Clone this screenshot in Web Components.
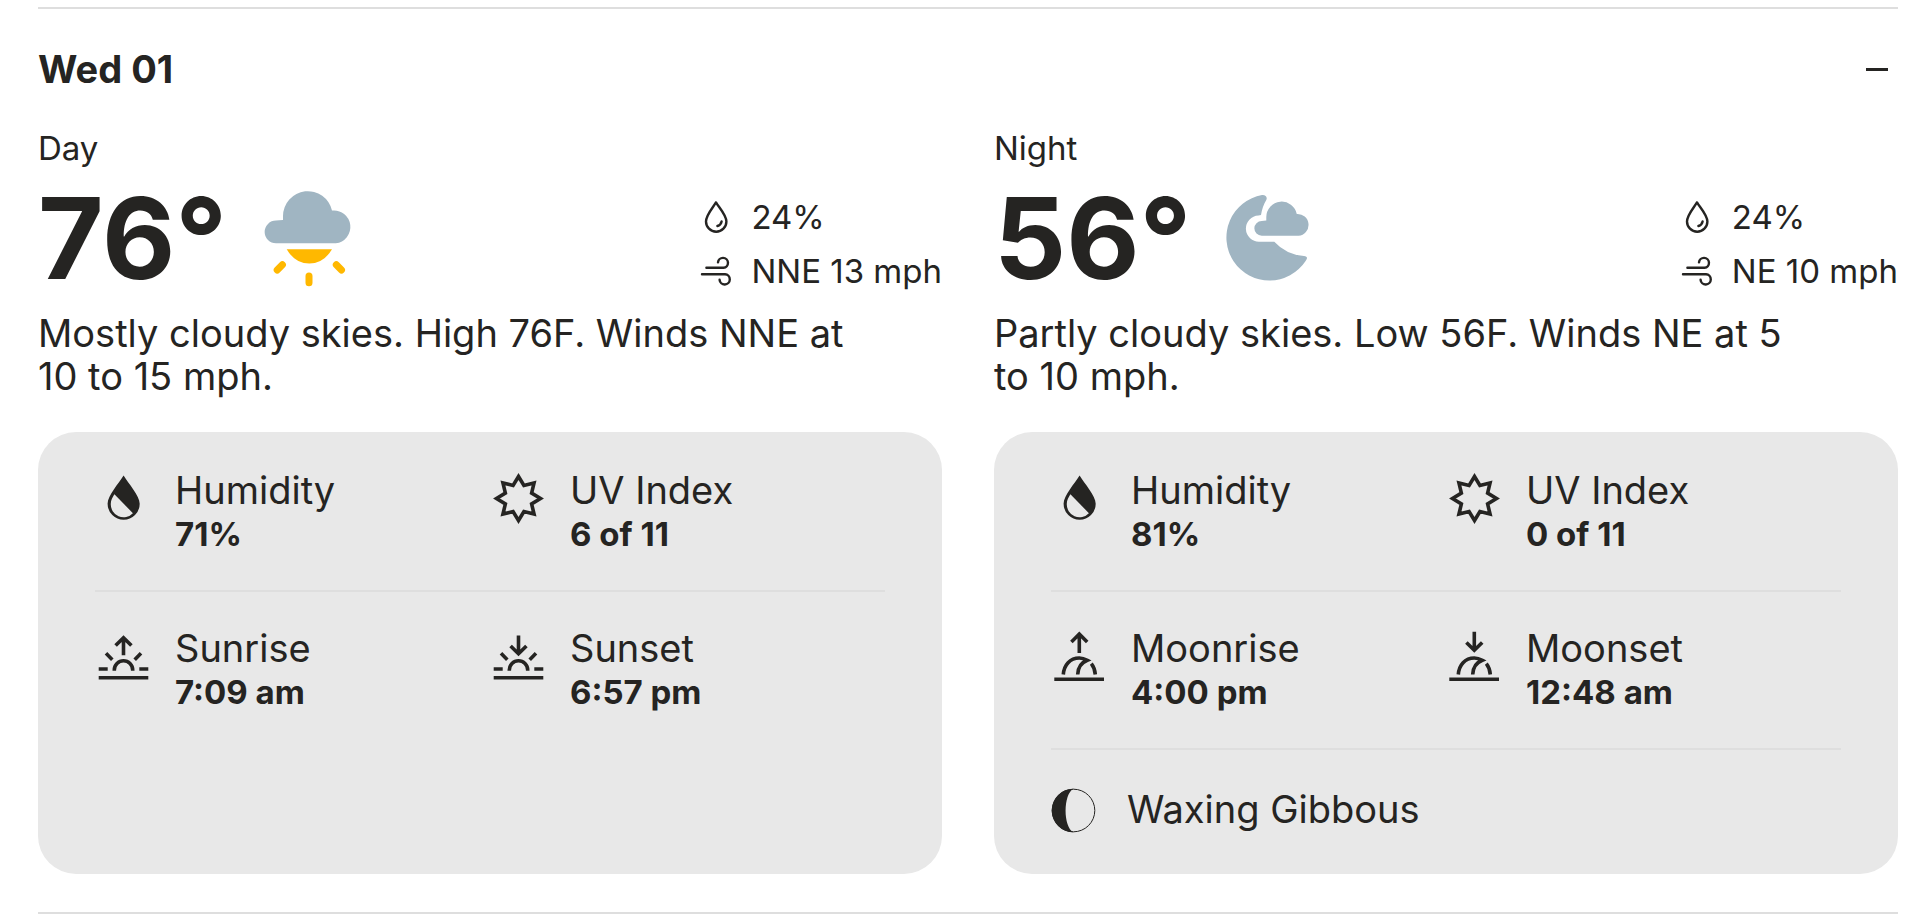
<!DOCTYPE html>
<html lang="en">
<head>
<meta charset="utf-8">
<title>Daily forecast</title>
<meta name="viewport" content="width=device-width, initial-scale=1">
<style>
  body {
    margin: 0;
    background: #fff;
    color: #252422;
    font-family: Inter, "Liberation Sans", sans-serif;
  }
</style>
</head>
<body>
<forecast-day label="Wed 01">
  <day-part name="Day" temp="76°" sky="cloud-sun" rain="24%" wind="NNE 13 mph">
    <span slot="summary">Mostly cloudy skies. High 76F. Winds NNE at 10 to 15 mph.</span>
    <detail-row>
      <detail-item icon="humidity" label="Humidity" value="71%"></detail-item>
      <detail-item icon="uv" label="UV Index" value="6 of 11"></detail-item>
    </detail-row>
    <detail-row last>
      <detail-item icon="sunrise" label="Sunrise" value="7:09 am"></detail-item>
      <detail-item icon="sunset" label="Sunset" value="6:57 pm"></detail-item>
    </detail-row>
  </day-part>
  <day-part name="Night" temp="56°" sky="cloud-moon" rain="24%" wind="NE 10 mph">
    <span slot="summary">Partly cloudy skies. Low 56F. Winds NE at 5 to 10 mph.</span>
    <detail-row>
      <detail-item icon="humidity" label="Humidity" value="81%"></detail-item>
      <detail-item icon="uv" label="UV Index" value="0 of 11"></detail-item>
    </detail-row>
    <detail-row>
      <detail-item icon="moonrise" label="Moonrise" value="4:00 pm"></detail-item>
      <detail-item icon="moonset" label="Moonset" value="12:48 am"></detail-item>
    </detail-row>
    <moon-phase>Waxing Gibbous</moon-phase>
  </day-part>
</forecast-day>

<script>
const moonBody = `<path d="M12.3 46.5C13 37 19 30 28.3 30C31.5 30 34 31 36.3 32.3C30.5 34.5 27 40 26.7 46.5M40.3 35.7Q43.8 40 44.3 46.5M3.3 51.3H53"/>`;
const sunBody = `<path d="M19.3 42.8V42a9.2 9.2 0 0 1 18.4 0v.8M3.7 41H12.7M44.3 41H53.3M11 25.3L17.3 31.7M46 25.3L39.7 31.7M3.7 49.7H53.3"/>`;
const line = (w, inner) => `<g fill="none" stroke="currentColor" stroke-width="${w}">${inner}</g>`;
const star = Array.from({ length: 16 }, (_, i) => {
  const r = i % 2 ? 14.2 : 22;
  const a = i * Math.PI / 8;
  return (28.5 + r * Math.sin(a)).toFixed(2) + ' ' + (28.5 - r * Math.cos(a)).toFixed(2);
}).join('L');

const ICONS = {
  'cloud-sun': [95, `<g transform="translate(2 1)"><path fill="#a0b5c2" d="M16 52.3a11.35 11.35 0 0 1 0-22.7Q19 29 23 29V25A24.8 24.8 0 0 1 72 19.6A16.4 16.4 0 1 1 75.8 52.3Z"/>
    <path fill="#ffb800" d="M26.7 58.3H72Q63.5 72.6 49.3 72.6T26.7 58.3Z"/>
    <path fill="none" stroke="#ffb800" stroke-width="7" stroke-linecap="round" d="M17.2 79L22.4 73.7M76.3 73.7L81.5 79M49 85V91.8"/></g>`],
  'cloud-moon': [95, `<g transform="translate(-1 0)"><path fill="#a0b5c2" d="M40 5C43.5 4.6 45.7 7 44.3 10Q40.5 16 39 25L36.5 25.5A13 13 0 0 0 37.5 51.7H52.3Q64 64.5 82 66C85.2 66.4 86 68 83.6 71A43.1 43.1 0 1 1 40 5Z"/>
    <path fill="#a0b5c2" d="M39.7 45.7a7.35 7.35 0 0 1 0-14.7L44.3 30.4V27A15.4 15.4 0 0 1 74.8 24A10.85 10.85 0 1 1 76.5 45.7Z"/></g>`],
  rain: [38, line(2.4, `<path stroke-linejoin="round" d="M19 4.4C16 9.5 9 17 9 23.5a10.2 10.2 0 0 0 20.4 0C29.4 17 22 9.5 19 4.4Z"/><path stroke-linecap="round" d="M24.6 23.4Q23.8 27 20.4 28"/>`)],
  wind: [38, line(2.4, `<path stroke-linecap="round" d="M9.4 15.8H26.5A5 5 0 1 0 21 10.4M5 22.3H28A5.1 5.1 0 1 1 22.6 27.8"/>`)],
  humidity: [57, `<path fill="currentColor" fill-rule="evenodd" d="M28.6 5.6C33 13 44.7 26 44.7 33.7A16 16 0 0 1 12.6 33.7C12.6 26 24 13 28.6 5.6ZM19.4 24.2C17.3 27.4 15.8 30.5 15.8 33.7A12.8 12.8 0 0 0 37.9 43.2Z"/>`],
  uv: [57, line(3.6, `<path d="M${star}Z"/>`)],
  sunrise: [57, line(3.6, sunBody + `<path d="M28.5 27.3V9M20.6 17.6L28.5 9.7L36.4 17.6"/>`)],
  sunset: [57, line(3.6, sunBody + `<path d="M28.5 7.6V26M20.6 17.9L28.5 25.8L36.4 17.9"/>`)],
  moonrise: [57, line(3.6, moonBody + `<path d="M28.3 25V6M20.4 14L28.3 6.1L36.2 14"/>`)],
  moonset: [57, line(3.6, moonBody + `<path d="M28.3 3.7V22.5M20.4 14.4L28.3 22.3L36.2 14.4"/>`)],
  gibbous: [45, `<circle cx="22.5" cy="23.5" r="21.3" fill="none" stroke="currentColor"/><path fill="currentColor" d="M22.5 1.7a21.8 21.8 0 0 0 0 43.6C12 40 12 7 22.5 1.7Z"/>`],
  minus: [38, line(3, `<path d="M6 19.5H28"/>`)]
};

class WeatherIcon extends HTMLElement {
  connectedCallback() {
    const [size, body] = ICONS[this.getAttribute('name')];
    this.attachShadow({ mode: 'open' }).innerHTML = `
      <style>:host { display: block; flex: none } svg { display: block; overflow: visible }</style>
      <svg width="${size}" height="${size}" viewBox="0 0 ${size} ${size}" aria-hidden="true">${body}</svg>`;
  }
}

class DetailItem extends HTMLElement {
  connectedCallback() {
    this.attachShadow({ mode: 'open' }).innerHTML = `
      <style>
        :host { display: flex; gap: 23px }
        weather-icon { margin-top: 3px }
        dl, dd { margin: 0 }
        dt { font-size: 38px; line-height: 46px; font-weight: 400 }
        dd { font-size: 33px; line-height: 42px; font-weight: 700 }
      </style>
      <weather-icon name="${this.getAttribute('icon')}"></weather-icon>
      <dl><dt>${this.getAttribute('label')}</dt><dd>${this.getAttribute('value')}</dd></dl>`;
  }
}

class DetailRow extends HTMLElement {
  connectedCallback() {
    this.attachShadow({ mode: 'open' }).innerHTML = `
      <style>
        :host { display: grid; grid-template-columns: 1fr 1fr; padding: 33px 0 35px; border-bottom: 2px solid #dedede }
        :host([last]) { border-bottom: 0 }
      </style>
      <slot></slot>`;
  }
}

class MoonPhase extends HTMLElement {
  connectedCallback() {
    this.attachShadow({ mode: 'open' }).innerHTML = `
      <style>
        :host { display: flex; align-items: center; gap: 31px; padding: 36px 0 42px; font-size: 38px; line-height: 46px; font-weight: 400 }
      </style>
      <weather-icon name="gibbous"></weather-icon><slot></slot>`;
  }
}

class DayPart extends HTMLElement {
  connectedCallback() {
    const at = name => this.getAttribute(name);
    this.attachShadow({ mode: 'open' }).innerHTML = `
      <style>
        :host { display: flex; flex-direction: column; min-width: 0 }
        h3, p, ul { margin: 0 }
        h3 { font-size: 33px; line-height: 38px; font-weight: 400 }
        .now { display: flex; align-items: flex-start; gap: 31px; margin-top: 23px }
        .temp { font-size: 113px; line-height: 96px; font-weight: 700 }
        ul { list-style: none; padding: 0; margin-left: auto; font-size: 33px; line-height: 54px }
        li { display: flex; align-items: center; gap: 16px }
        .summary { width: 90%; margin-top: 14px; font-size: 38px; line-height: 43px }
        .panel { flex: 1; margin-top: 34px; padding: 2px 57px 0; border-radius: 38px; background: #e8e8e8 }
      </style>
      <h3>${at('name')}</h3>
      <div class="now">
        <span class="temp">${at('temp')}</span>
        <weather-icon name="${at('sky')}"></weather-icon>
        <ul>
          <li><weather-icon name="rain"></weather-icon>${at('rain')}</li>
          <li><weather-icon name="wind"></weather-icon>${at('wind')}</li>
        </ul>
      </div>
      <p class="summary"><slot name="summary"></slot></p>
      <div class="panel"><slot></slot></div>`;
  }
}

class ForecastDay extends HTMLElement {
  connectedCallback() {
    this.attachShadow({ mode: 'open' }).innerHTML = `
      <style>
        :host { display: block; padding: 7px 22px 0 38px }
        section { border: solid #dedede; border-width: 2px 0; padding-bottom: 38px }
        header { display: flex; align-items: center; justify-content: space-between; padding: 37px 0 }
        h2 { margin: 0; font-size: 38px; line-height: 46px; font-weight: 700 }
        button { padding: 0; border: 0; background: none; color: inherit; cursor: pointer }
        .parts { display: grid; grid-template-columns: 1fr 1fr; gap: 52px }
        .parts[hidden] { display: none }
      </style>
      <section>
        <header>
          <h2>${this.getAttribute('label')}</h2>
          <button type="button" aria-expanded="true" aria-label="Collapse"><weather-icon name="minus"></weather-icon></button>
        </header>
        <div class="parts"><slot></slot></div>
      </section>`;
    const button = this.shadowRoot.querySelector('button');
    const parts = this.shadowRoot.querySelector('.parts');
    button.addEventListener('click', () => {
      parts.hidden = !parts.hidden;
      button.setAttribute('aria-expanded', String(!parts.hidden));
    });
  }
}

customElements.define('weather-icon', WeatherIcon);
customElements.define('detail-item', DetailItem);
customElements.define('detail-row', DetailRow);
customElements.define('moon-phase', MoonPhase);
customElements.define('day-part', DayPart);
customElements.define('forecast-day', ForecastDay);
</script>
</body>
</html>
